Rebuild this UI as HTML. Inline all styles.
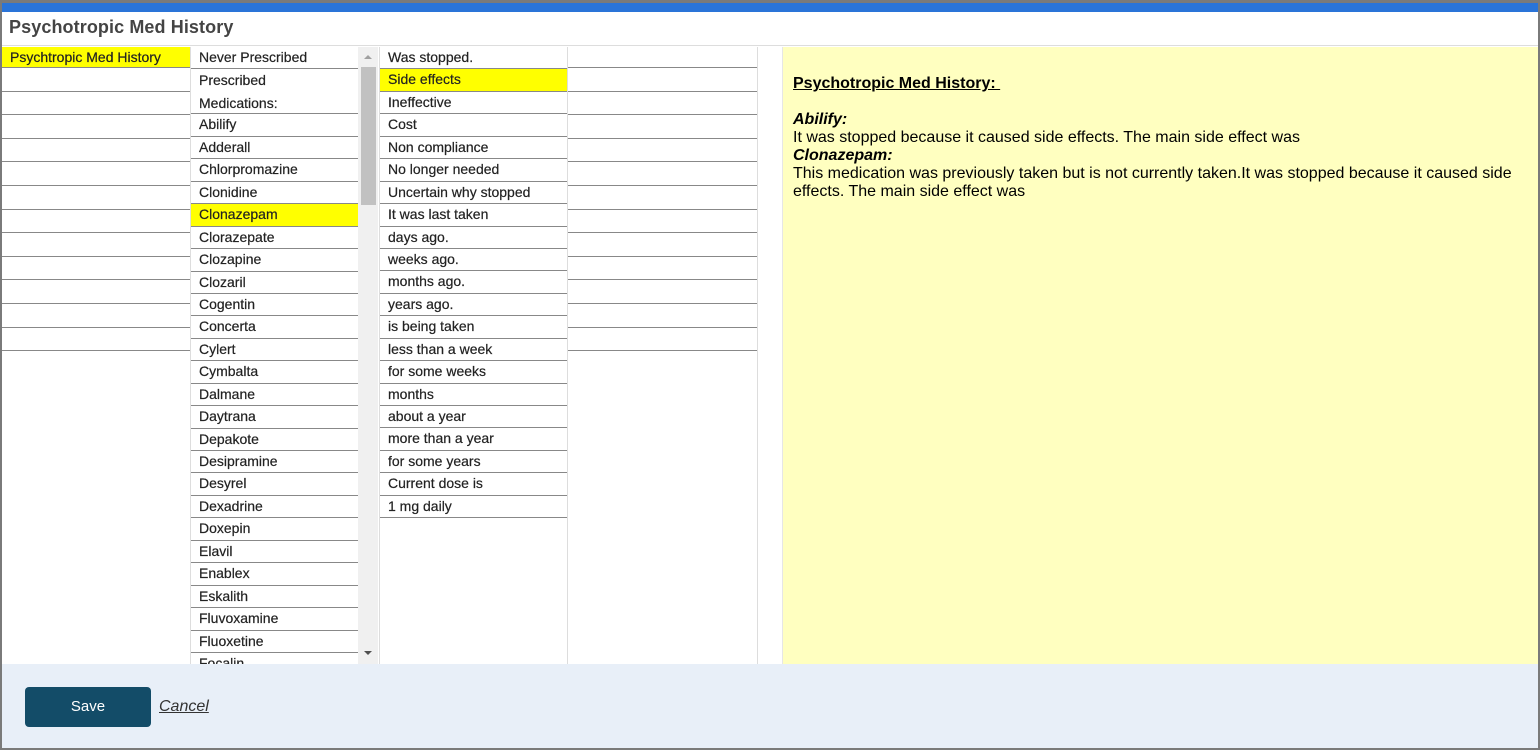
<!DOCTYPE html>
<html><head><meta charset="utf-8"><style>
*{box-sizing:border-box;margin:0;padding:0}
body{width:1540px;height:750px;background:#7a7a7a;position:relative;overflow:hidden;font-family:"Liberation Sans",sans-serif}
#dlg{position:absolute;left:2px;top:3px;width:1536px;height:745px;background:#fff;overflow:hidden}
#bar{position:absolute;left:0;top:0;width:100%;height:9px;background:#2a74d8}
#title{position:absolute;left:7px;top:14px;font-size:18px;font-weight:bold;color:#444;letter-spacing:0.1px}
#hline{position:absolute;left:0;top:42px;width:100%;height:1px;background:#ddd}
.col{position:absolute;top:44px;height:617px;overflow:hidden}
.r{height:22.45px;border-bottom:1px solid #888;font-size:14px;color:#222;padding-left:8px;line-height:21px;white-space:nowrap;-webkit-text-stroke:0.2px #222}
.y{background:#ff0}
.c1 .r,.c4 .r{height:23.6px}
.c1 .r:first-child,.c4 .r:first-child{height:21px}
#sb{position:absolute;left:356px;top:44px;width:20px;height:617px;background:#f0f0f0}
#thumb{position:absolute;left:3px;top:20px;width:15px;height:138px;background:#c1c1c1}
#panel{position:absolute;left:780px;top:44px;width:756px;height:617px;background:#ffffc0;border-left:1px solid #e6e6e6;padding:28px 0 0 10px;font-family:"Liberation Sans",Arial,sans-serif;font-size:16px;color:#000;line-height:18px}
#foot{position:absolute;left:0;top:661px;width:100%;height:84px;background:#e8eff8}
#save{position:absolute;left:23px;top:23px;width:126px;height:40px;background:#134c68;border-radius:4px;color:#fff;font-size:15px;text-align:center;line-height:40px}
#cancel{position:absolute;left:157px;top:34px;font-size:16px;font-style:italic;text-decoration:underline;color:#333}
</style></head><body>
<div id="dlg">
<div id="bar"></div>
<div id="title">Psychotropic Med History</div>
<div id="hline"></div>
<div class="col c1" style="left:0;width:188px">
<div class="r y">Psychtropic Med History</div>
<div class="r"></div><div class="r"></div><div class="r"></div><div class="r"></div><div class="r"></div><div class="r"></div><div class="r"></div><div class="r"></div><div class="r"></div><div class="r"></div><div class="r"></div><div class="r"></div>
</div>
<div class="col" style="left:188px;width:168px;border-left:1px solid #ddd">
<div class="r">Never Prescribed</div>
<div class="r" style="height:45px;line-height:22.5px">Prescribed<br>Medications:</div>
<div class="r">Abilify</div><div class="r">Adderall</div><div class="r">Chlorpromazine</div><div class="r">Clonidine</div><div class="r y">Clonazepam</div><div class="r">Clorazepate</div><div class="r">Clozapine</div><div class="r">Clozaril</div><div class="r">Cogentin</div><div class="r">Concerta</div><div class="r">Cylert</div><div class="r">Cymbalta</div><div class="r">Dalmane</div><div class="r">Daytrana</div><div class="r">Depakote</div><div class="r">Desipramine</div><div class="r">Desyrel</div><div class="r">Dexadrine</div><div class="r">Doxepin</div><div class="r">Elavil</div><div class="r">Enablex</div><div class="r">Eskalith</div><div class="r">Fluvoxamine</div><div class="r">Fluoxetine</div><div class="r">Focalin</div>
</div>
<div id="sb"><div id="thumb"></div>
<div style="position:absolute;left:6px;top:8px;width:0;height:0;border-left:4px solid transparent;border-right:4px solid transparent;border-bottom:4px solid #a0a0a0"></div>
<div style="position:absolute;left:6px;top:604px;width:0;height:0;border-left:4px solid transparent;border-right:4px solid transparent;border-top:4px solid #505050"></div>
</div>
<div class="col" style="left:377px;width:189px;border-left:1px solid #ddd;border-right:1px solid #ddd">
<div class="r">Was stopped.</div><div class="r y">Side effects</div><div class="r">Ineffective</div><div class="r">Cost</div><div class="r">Non compliance</div><div class="r">No longer needed</div><div class="r">Uncertain why stopped</div><div class="r">It was last taken</div><div class="r">days ago.</div><div class="r">weeks ago.</div><div class="r">months ago.</div><div class="r">years ago.</div><div class="r">is being taken</div><div class="r">less than a week</div><div class="r">for some weeks</div><div class="r">months</div><div class="r">about a year</div><div class="r">more than a year</div><div class="r">for some years</div><div class="r">Current dose is</div><div class="r">1 mg daily</div>
</div>
<div class="col c4" style="left:566px;width:190px;border-right:1px solid #ddd">
<div class="r"></div><div class="r"></div><div class="r"></div><div class="r"></div><div class="r"></div><div class="r"></div><div class="r"></div><div class="r"></div><div class="r"></div><div class="r"></div><div class="r"></div><div class="r"></div><div class="r"></div>
</div>
<div id="panel">
<b style="text-decoration:underline">Psychotropic Med History:&nbsp;</b><br><br>
<b><i>Abilify:</i></b><br>
It was stopped because it caused side effects. The main side effect was<br>
<b><i>Clonazepam:</i></b><br>
This medication was previously taken but is not currently taken.It was stopped because it caused side effects. The main side effect was
</div>
<div id="foot"><div id="save">Save</div><div id="cancel">Cancel</div></div>
</div>
</body></html>
